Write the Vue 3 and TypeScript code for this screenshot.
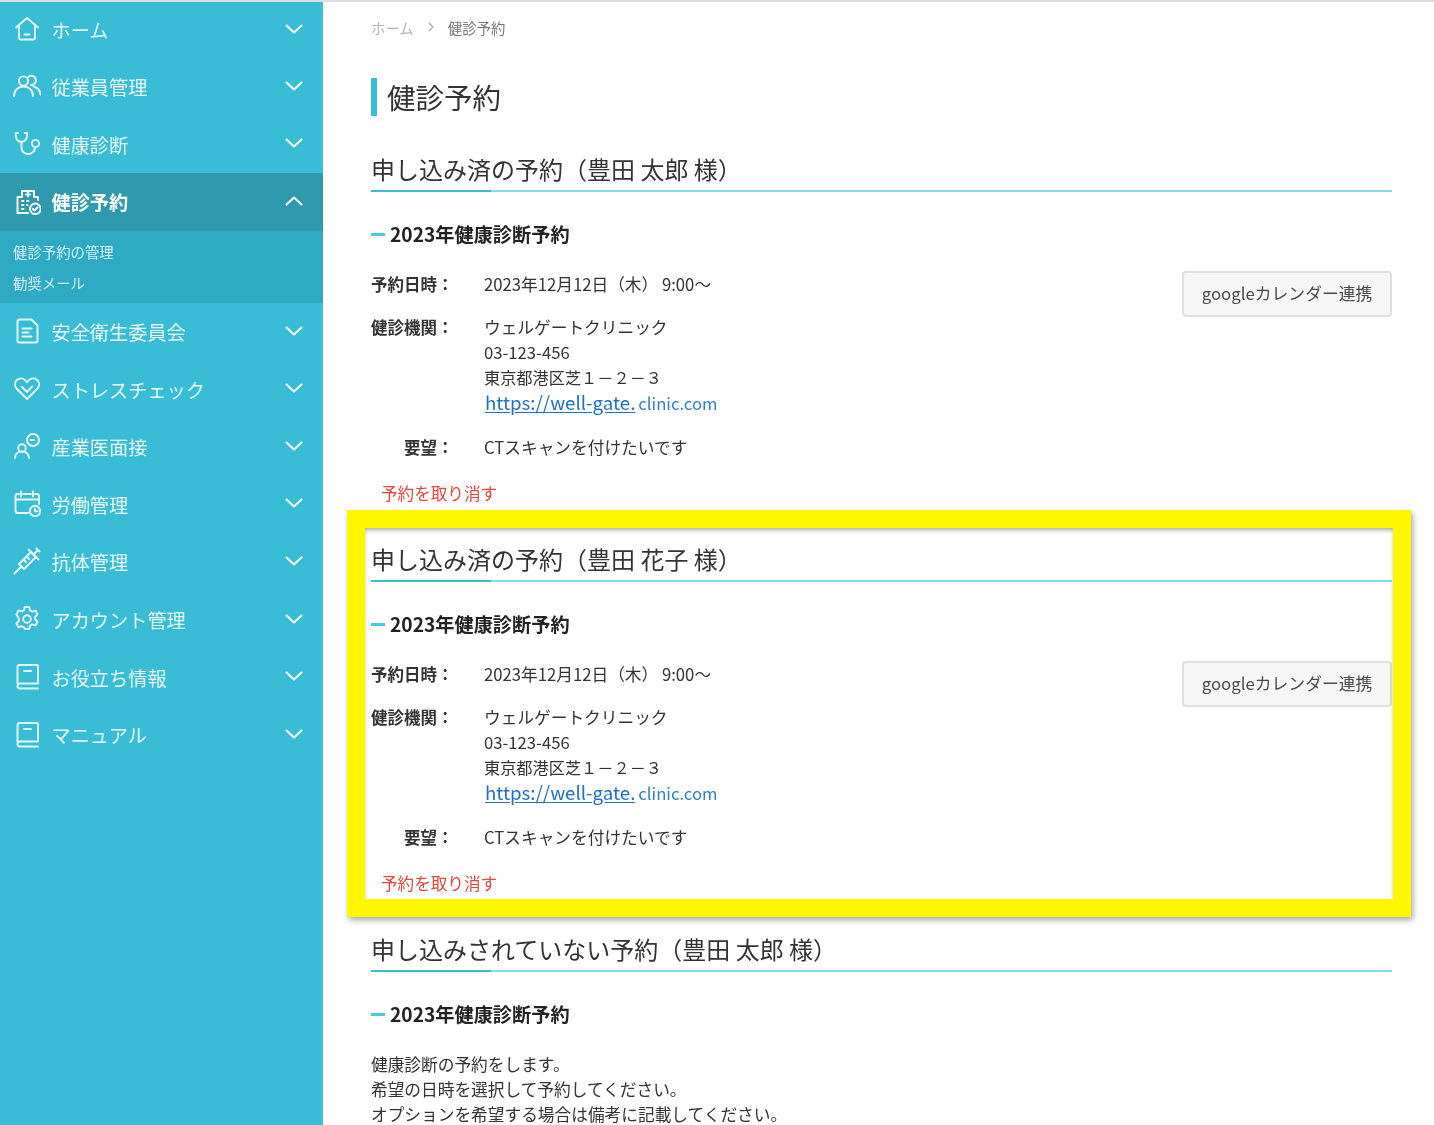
<script setup lang="ts">
interface NavItem { label: string; icon: string; active?: boolean; children?: string[] }

const items: NavItem[] = [
  { label: 'ホーム', icon: 'home' },
  { label: '従業員管理', icon: 'users' },
  { label: '健康診断', icon: 'steth' },
  { label: '健診予約', icon: 'clinic', active: true, children: ['健診予約の管理', '勧奨メール'] },
  { label: '安全衛生委員会', icon: 'doc' },
  { label: 'ストレスチェック', icon: 'heart' },
  { label: '産業医面接', icon: 'talk' },
  { label: '労働管理', icon: 'calendar' },
  { label: '抗体管理', icon: 'syringe' },
  { label: 'アカウント管理', icon: 'gear' },
  { label: 'お役立ち情報', icon: 'book' },
  { label: 'マニュアル', icon: 'book' },
]

const booked = [
  { name: '豊田 太郎', highlight: false },
  { name: '豊田 花子', highlight: true },
]
</script>

<template>
  <div class="page">
    <div class="topline"></div>
    <div class="shell">
      <nav class="sidebar">
        <template v-for="item in items" :key="item.label">
          <div class="nav-row" :class="{ active: item.active }">
            <svg class="nav-icon" viewBox="0 0 28 28" fill="none" stroke="currentColor" stroke-width="1.9" stroke-linecap="round" stroke-linejoin="round">
              <template v-if="item.icon === 'home'">
                <path d="M3 12.500 14 3l11 9.500" />
                <path d="M6 10.500V23a1.500 1.500 0 0 0 1.500 1.500h13A1.500 1.500 0 0 0 22 23V10.500" />
                <path d="M11.500 19.500h5" />
              </template>
              <template v-else-if="item.icon === 'users'">
                <circle cx="10.500" cy="9" r="4.600" />
                <path d="M1 24c0-5.800 4-9.500 9.500-9.500S20 18.200 20 24" />
                <path d="M15.500 4.800a4.600 4.600 0 1 1 2.500 8.200" />
                <path d="M20.500 14.500c3.500 1 6.500 3.500 7 8" />
              </template>
              <template v-else-if="item.icon === 'steth'">
                <path d="M5 4H2.800C2 8.500 3.500 12.500 8.500 13 13 12.500 14.800 8.500 14 4h-2.200" />
                <path d="M8.500 13v6c0 3.500 3 6 6.500 6s7-2.500 7-6.500" />
                <circle cx="22.500" cy="14.500" r="3.600" />
              </template>
              <template v-else-if="item.icon === 'clinic'">
                <path d="M9 10V4h12v6h4v3" />
                <path d="M9 10H4.500v16H15" />
                <path d="M15 5.500v4M13 7.500h4" />
                <path d="M9 14h1.500M14 14h1.500M9 18h1.500M14 18h.5M9 22h1.500" />
                <circle cx="22.300" cy="21.800" r="5.300" />
                <path d="m19.800 21.800 1.800 1.800 3-3.200" />
              </template>
              <template v-else-if="item.icon === 'doc'">
                <path d="M6.500 2.500h12l6 6v15a2 2 0 0 1-2 2h-16a2 2 0 0 1-2-2v-19a2 2 0 0 1 2-2Z" />
                <path d="M9.500 11.500h9M9.500 15.500h6M9.500 19.500h9" />
              </template>
              <template v-else-if="item.icon === 'heart'">
                <path d="M14 25 3.500 14.500C.8 11.500 1.500 7 5 5.200c3.500-1.700 7 0 9 3 2-3 5.500-4.700 9-3 3.500 1.800 4.200 6.300 1.500 9.300L14 25Z" />
                <path d="m9 13 5 5 5-5.500" />
              </template>
              <template v-else-if="item.icon === 'talk'">
                <circle cx="9" cy="16" r="3.800" />
                <path d="M2 26c0-4 3-6.500 7-6.500s6.500 2.500 7 6.500" />
                <circle cx="20" cy="8" r="6" />
                <path d="M17.500 8h5" stroke-dasharray="1 1.500" />
              </template>
              <template v-else-if="item.icon === 'calendar'">
                <path d="M22 5h2a2 2 0 0 1 2 2v8M6 5H4.500a2 2 0 0 0-2 2v15a2 2 0 0 0 2 2H15" />
                <path d="M2.500 10.500H26M10 5h8M8 2.500v5M20 2.500v5" />
                <circle cx="22" cy="22" r="5.200" />
                <path d="M22 19.500V22.300h2.500" />
              </template>
              <template v-else-if="item.icon === 'syringe'">
                <path d="m1.500 26.500 6-6" />
                <path d="m5 18 5 5 12-12-5-5L5 18Z" transform="translate(1 -1)" />
                <path d="m15.500 2.500 10 10M21 7l4-4M23.500 1.500l3 3" />
                <path d="m11 13 2 2M14 10l2 2" />
              </template>
              <template v-else-if="item.icon === 'gear'">
                <path d="M11.800 2h4.400l.8 3.400 2.100 1.200 3.300-1 2.200 3.800-2.500 2.400v2.400l2.500 2.400-2.200 3.800-3.300-1-2.100 1.200-.8 3.400h-4.400L11 22.400l-2.100-1.200-3.300 1-2.200-3.800 2.500-2.400v-2.400L3.400 9.200l2.200-3.800 3.300 1L11 5.200 11.800 2Z" />
                <circle cx="14" cy="14" r="3.800" />
              </template>
              <template v-else>
                <path d="M4.500 21.500V5a2 2 0 0 1 2-2H24a1 1 0 0 1 1 1v17.500H7a2.500 2.500 0 0 0 0 5h18" />
                <path d="M11 9h7" />
              </template>
            </svg>
            <span class="nav-label">{{ item.label }}</span>
            <svg class="chevron" viewBox="0 0 18 10" fill="none" stroke="currentColor" stroke-width="2" stroke-linecap="round" stroke-linejoin="round">
              <path :d="item.active ? 'M1.500 8.500 9 1.500l7.500 7' : 'M1.500 1.500 9 8.500l7.500-7'" />
            </svg>
          </div>
          <div v-if="item.children" class="sub-list">
            <div v-for="child in item.children" :key="child" class="sub-row">{{ child }}</div>
          </div>
        </template>
      </nav>

      <main class="main">
        <div class="crumbs">
          <span class="crumb-home">ホーム</span>
          <svg class="crumb-sep" viewBox="0 0 6 10" fill="none" stroke="currentColor" stroke-width="1.200"><path d="m1 1 4 4-4 4" /></svg>
          <span class="crumb-now">健診予約</span>
        </div>
        <h1 class="title">健診予約</h1>

        <section v-for="entry in booked" :key="entry.name" class="section">
          <div v-if="entry.highlight" class="marker"></div>
          <h2 class="section-head">申し込み済の予約（{{ entry.name }} 様）</h2>
          <h3 class="sub-head">2023年健康診断予約</h3>
          <div class="detail">
            <div class="rows">
              <div class="row first">
                <div class="key">予約日時：</div>
                <div class="val">2023年12月12日（木） 9:00～</div>
              </div>
              <div class="row">
                <div class="key">健診機関：</div>
                <div class="val">
                  <div>ウェルゲートクリニック</div>
                  <div>03-123-456</div>
                  <div class="address">東京都港区芝１－２－３</div>
                  <div class="link-line"><a class="link">https://well-gate.</a><span class="link-rest">clinic.com</span></div>
                </div>
              </div>
              <div class="row">
                <div class="key">要望：</div>
                <div class="val">CTスキャンを付けたいです</div>
              </div>
            </div>
            <button class="cal-btn" type="button">googleカレンダー連携</button>
          </div>
          <div class="cancel">予約を取り消す</div>
        </section>

        <section class="section">
          <h2 class="section-head">申し込みされていない予約（豊田 太郎 様）</h2>
          <h3 class="sub-head">2023年健康診断予約</h3>
          <p class="note">健康診断の予約をします。<br />希望の日時を選択して予約してください。<br />オプションを希望する場合は備考に記載してください。</p>
        </section>
      </main>
    </div>
  </div>
</template>

<style>
html, body { margin: 0; height: 100%; overflow: hidden; background: #fff; }
</style>

<style scoped>
.page {
  width: 1434px;
  height: 1125px;
  overflow: hidden;
  font-family: "Noto Sans CJK JP", "Noto Sans", sans-serif;
  color: #333;
  background: #fff;
  filter: blur(0.4px);
}
.topline { height: 2px; background: #dedede; }
.shell { display: flex; height: 1123px; }
.sidebar {
  width: 323px;
  flex: none;
  background: #39bdd7;
  color: #e9f8fb;
}
.nav-row {
  height: 57.600px;
  display: flex;
  align-items: center;
  padding-left: 13px;
  padding-right: 20px;
  box-sizing: border-box;
}
.nav-row:first-child { height: 56px; }
.nav-row.active { background: #2f99ad; color: #fff; font-weight: 700; }
.nav-icon { width: 28px; height: 28px; flex: none; margin-top: -2px; }
.nav-label { margin: 2px 0 0 10.500px; font-size: 19.200px; line-height: 1; flex: 1; }
.chevron { width: 18px; height: 10px; flex: none; margin-top: -2px; color: #fff; }
.sub-list { height: 72px; background: #2faac5; padding-top: 5px; box-sizing: border-box; }
.sub-row { height: 31px; line-height: 31px; padding-left: 13px; font-size: 14.400px; color: #d5f0f5; }

.main { flex: 1; padding: 0 42px 0 48px; min-width: 0; }
.crumbs { display: flex; align-items: center; height: 50px; font-size: 14.400px; }
.crumb-home { color: #b5b5b5; }
.crumb-sep { width: 6px; height: 10px; margin: 0 14px; color: #aaa; }
.crumb-now { color: #777; }
.title {
  margin: 26px 0 20px;
  height: 38px;
  line-height: 38px;
  border-left: 6px solid #39bdd7;
  padding-left: 10px;
  font-size: 28.500px;
  font-weight: 400;
  color: #333;
}
.section { position: relative; height: 390px; padding-top: 17px; box-sizing: border-box; }
.section-head {
  position: relative;
  margin: 0;
  height: 32px;
  line-height: 32px;
  padding-bottom: 5px;
  box-sizing: content-box;
  font-size: 24px;
  font-weight: 400;
  color: #333;
  border-bottom: 2px solid #7fdcec;
}
.section-head::after {
  content: "";
  position: absolute;
  left: 0;
  bottom: -2px;
  width: 120px;
  height: 2px;
  background: #39bdd7;
}
.sub-head {
  display: flex;
  align-items: center;
  margin: 28px 0 0;
  height: 28px;
  font-size: 19.200px;
  font-weight: 700;
  color: #222;
}
.sub-head::before {
  content: "";
  width: 14px;
  height: 3px;
  margin-right: 5px;
  background: #45cce4;
}
.detail { display: flex; justify-content: space-between; align-items: flex-start; margin-top: 24px; }
.rows { display: flex; flex-direction: column; gap: 19px; }
.row { display: flex; font-size: 16.700px; line-height: 25px; color: #333; }
.first { margin-bottom: -1px; }
.key { width: 82.500px; text-align: right; font-size: 16.500px; font-weight: 700; margin-right: 30.500px; flex: none; white-space: nowrap; }
.val { flex: none; }
.address { font-size: 16.200px; }
.link-line { height: 26px; line-height: 23px; margin-left: 1px; white-space: nowrap; }
.link { font-size: 18.700px; color: #1f6fd0; text-decoration: underline; text-underline-offset: 2px; }
.link-rest { font-size: 16.700px; color: #2d7fd3; margin-left: 3px; }
.cal-btn {
  width: 210px;
  height: 46px;
  margin-top: -1px;
  border: 2px solid #dfdfdf;
  border-radius: 4px;
  background: #f6f6f6;
  color: #4a4a4a;
  font: 400 16.800px "Noto Sans CJK JP", "Noto Sans", sans-serif;
  padding: 0 0 2px;
}
.cancel { margin: 21px 0 0 10px; font-size: 16.600px; line-height: 25px; color: #e8453c; }
.note { margin: 24px 0 0; font-size: 16.700px; line-height: 25px; color: #333; }
.marker {
  position: absolute;
  left: -24px;
  top: -16px;
  width: 1064px;
  height: 407px;
  box-sizing: border-box;
  border: 18px solid #fff700;
  box-shadow: 2px 3px 6px rgba(0, 0, 0, .35), inset 0 3px 4px -1px rgba(0, 0, 0, .35);
  pointer-events: none;
}
</style>
